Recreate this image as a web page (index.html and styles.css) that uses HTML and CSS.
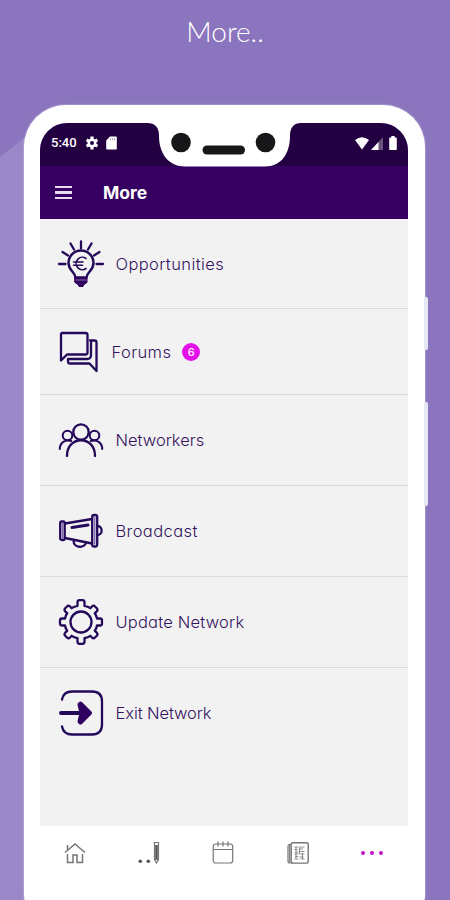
FILE: index.html
```html
<!DOCTYPE html>
<html lang="en">
<head>
    <meta charset="UTF-8">
    <meta name="viewport" content="width=device-width, initial-scale=1.0">
    <title>More</title>
    <link rel="stylesheet" href="styles.css">
</head>
<body>
    <h1 class="page-title">More..</h1>

    <div class="phone">
        <span class="side-button power"></span>
        <span class="side-button volume"></span>

        <div class="screen">
            <!-- Status bar -->
            <div class="status-bar">
                <div class="status-left">
                    <span class="time">5:40</span>
                    <svg width="12" height="14" viewBox="0 0 12 14">
                        <g stroke="#fff" stroke-width="3.2"><path d="M6 .6v12.8M.5 3.8l11 6.4M.5 10.2l11-6.4"/></g>
                        <circle cx="6" cy="7" r="4.5" fill="#fff"/>
                        <circle cx="6" cy="7" r="2" fill="#230042"/>
                    </svg>
                    <svg width="11" height="14" viewBox="0 0 11 14">
                        <path d="M4 .5h6q.8 0 .8.8v11.4q0 .8-.8.8H1q-.8 0-.8-.8V4.5z" fill="#fff"/>
                        <path d="M4.5 2v2.5M6.5 2v2.5M8.5 2v2.5" stroke="#b9aec4"/>
                    </svg>
                </div>
                <div class="status-right">
                    <svg width="14" height="13" viewBox="0 0 14 13"><path d="M0 3Q7-2.5 14 3L7 12.5z" fill="#fff"/></svg>
                    <svg width="12" height="13" viewBox="0 0 12 13"><path d="M12 0v13H0z" fill="#69517c"/><path d="M7.5 4.9V13H0z" fill="#fff"/></svg>
                    <svg class="battery" width="8" height="14" viewBox="0 0 8 14"><path d="M2.3 0h3.4v1.5H7q.8 0 .8.8v10.9q0 .8-.8.8H1q-.8 0-.8-.8V2.3q0-.8.8-.8h1.3z" fill="#fff"/></svg>
                </div>
                <svg class="notch" width="154" height="44" viewBox="0 0 154 44">
                    <path d="M0 0C8 0 12 4 12 13C12 31 22 43.5 38 43.5H118C134 43.5 143 31 143 13C143 4 147 0 154 0z" fill="#fff"/>
                    <circle cx="34" cy="19.5" r="9.8" fill="#17171a"/>
                    <circle cx="118.500" cy="19.5" r="9.8" fill="#17171a"/>
                    <rect x="55.500" y="22.5" width="42.5" height="9" rx="4.5" fill="#17171a"/>
                </svg>
            </div>

            <!-- Header -->
            <header class="header">
                <div class="burger"><i></i><i></i><i></i></div>
                <h2>More</h2>
            </header>

            <!-- Menu -->
            <ul class="menu">
                <li class="menu-item opportunities">
                    <svg class="icon" width="44" height="48" viewBox="0 0 44 48">
                        <path d="M0 24h6.500M37.500 24H44M3.500 12l5.500 3.500M40.500 12L35 15.500M11.500 3.500l3.500 6M32.500 3.500l-3.500 6M22 1.500v7"/>
                        <path d="M16.500 37.500C16.500 32 9.500 31 9.500 23a12.500 12.500 0 0 1 25 0c0 8-7 9-7 14.500z" stroke-width="2.500"/>
                        <path d="M27 18.500a6.200 6.200 0 1 0 0 10M14.500 22h9.500M14.500 25.300h9" stroke-width="1.600"/>
                        <path d="M16 37.500h12v5l-3 2-1 2h-4l-1-2-3-2z" class="solid" stroke-width="1"/>
                        <path d="M17 40h10" stroke="#8d6fa8" stroke-width="1"/>
                    </svg>
                    <span class="label wide">Opportunities</span>
                </li>
                <li class="menu-item forums">
                    <svg class="icon" width="40" height="42" viewBox="0 0 40 42">
                        <path d="M3 2h23.500q2 0 2 2v17.500q0 2-2 2H8l-6 6V3q0-1 1-1z"/>
                        <path d="M31 9.500h4.500q2 0 2 2V40l-7-7.500H11q-2 0-2-2V28h19q4 0 4-4V9.500"/>
                    </svg>
                    <span class="label wide">Forums</span>
                    <span class="badge">6</span>
                </li>
                <li class="menu-item">
                    <svg class="icon" width="44" height="36" viewBox="0 0 44 36">
                        <circle cx="22" cy="10" r="7.700"/>
                        <path d="M8 34c0-21 28-21 28 0"/>
                        <circle cx="8.500" cy="13.500" r="4.800" stroke-width="2"/>
                        <circle cx="35.500" cy="13.500" r="4.800" stroke-width="2"/>
                        <path d="M.8 27c0-6.500 5.500-10 11.500-8M43.200 27c0-6.500-5.500-10-11.500-8" stroke-width="2"/>
                    </svg>
                    <span class="label">Networkers</span>
                </li>
                <li class="menu-item">
                    <svg class="icon" width="44" height="36" viewBox="0 0 44 36">
                        <rect x="1.200" y="8.500" width="4.500" height="18.500" rx="1.500"/>
                        <rect x="33.200" y="2" width="5" height="31.500" rx="2"/>
                        <path d="M6 10.500L33 6M6 25l27 5.500M38.500 13c5.500 0 5.500 9 0 9M14.500 27.500c0 8 11.500 8 12.500 2"/>
                        <path d="M13 14.500l16-2.500" stroke-width="3"/>
                        <path d="M3.500 10v15" stroke="#8270b0" stroke-width="1.500"/>
                        <path d="M35.700 4v27" stroke="#8270b0" stroke-width="1.500"/>
                    </svg>
                    <span class="label wide">Broadcast</span>
                </li>
                <li class="menu-item">
                    <svg class="icon" width="44" height="46" viewBox="0 0 44 46">
                        <path d="M18.500 6.800V3.500Q18.500 1.200 20.500 1.200H23.500Q25.500 1.200 25.500 3.500V6.800Q29 7.500 31.300 9.200L33.200 7.300Q34.500 6 36 7.500L37.800 9.300Q39.200 10.800 37.800 12.300L35.800 14.200Q37.500 16.500 38 19.500H41Q43 19.500 43 21.500V24.500Q43 26.500 41 26.500H38Q37.500 29.500 35.800 31.800L37.800 33.700Q39.200 35.200 37.800 36.700L36 38.500Q34.500 40 33.200 38.700L31.300 36.800Q29 38.500 25.500 39.200V42.500Q25.500 44.800 23.500 44.800H20.500Q18.500 44.800 18.500 42.500V39.200Q15 38.500 12.700 36.800L10.800 38.700Q9.500 40 8 38.500L6.200 36.700Q4.800 35.200 6.200 33.700L8.200 31.800Q6.500 29.500 6 26.500H3Q1 26.500 1 24.500V21.500Q1 19.500 3 19.500H6Q6.500 16.500 8.200 14.200L6.200 12.300Q4.800 10.800 6.200 9.300L8 7.500Q9.500 6 10.800 7.300L12.700 9.200Q15 7.500 18.500 6.800z"/>
                        <circle cx="22" cy="23" r="10.500"/>
                    </svg>
                    <span class="label update">Update Network</span>
                </li>
                <li class="menu-item">
                    <svg class="icon" width="44" height="46" viewBox="0 0 44 46">
                        <path d="M3 9.500Q4.500 1.500 13 1.500H33Q43 1.500 43 11.500V34.500Q43 44.500 33 44.500H13Q4.500 44.500 3 36.500"/>
                        <path d="M2 23h20" stroke-width="4"/>
                        <path d="M21.500 13.500L31 23l-9.500 9.500-1-1 2-8.500-2-8.500z" class="solid" stroke-width="4"/>
                    </svg>
                    <span class="label narrow">Exit Network</span>
                </li>
            </ul>
        </div>

        <!-- Bottom tabs -->
        <nav class="tabs">
            <svg class="tab" width="22" height="22" viewBox="0 0 22 22">
                <path d="M1 10.500L11 2l10 8.500M3.500 8.500V3M3.500 12v8.500h5.500V13h4v7.500h5.500V12" stroke-width="1.500"/>
            </svg>
            <svg class="tab" width="22" height="22" viewBox="0 0 22 22">
                <circle cx="2.300" cy="19.300" r="1.800" fill="#555" stroke="none"/>
                <circle cx="10.300" cy="19.300" r="1.800" fill="#555" stroke="none"/>
                <path d="M16.500.5h4v17l-2 3.500-2-3.500zM16.500 3.500h4M16.500 17.500h4"/>
                <path d="M18.500 4v13" stroke="#555" stroke-width="2.500"/>
            </svg>
            <svg class="tab" width="22" height="24" viewBox="0 0 22 24">
                <rect x="1.200" y="3" width="19.500" height="19" rx="2.500"/>
                <path d="M1 8.500h20M6 .5v5M11 .5v5M16 .5v5"/>
            </svg>
            <svg class="tab" width="22" height="22" viewBox="0 0 22 22">
                <rect x="4.200" y=".8" width="17" height="20.300" rx="1.500" stroke-width="1.400"/>
                <path d="M4 2.500H2.500Q1 2.500 1 4v15q0 2 2 2h3M2.700 3v17"/>
                <path d="M7.500 5h4M13 5h4.500M7.500 7.500h3M12 7h4M8 10h3.500M13 9.500h4.500M7.500 12h4M13 12h4.500M8 14.500h3.500M12.500 15h4M7.500 17h4M13.500 17h4M9 5v12M12.500 5v7M15.500 11v6" stroke-width=".8"/>
            </svg>
            <div class="tab dots"><i></i><i></i><i></i></div>
        </nav>
    </div>
</body>
</html>
```
FILE: styles.css
```css
* {
    margin: 0;
    padding: 0;
    box-sizing: border-box;
}

body {
    position: relative;
    height: 900px;
    overflow: hidden;
    background: #8b75be;
    font-family: Inter, "Open Sans", sans-serif;
}

/* lighter diagonal area behind the phone */
body::before {
    content: "";
    position: absolute;
    left: 0;
    top: 130px;
    width: 34px;
    height: 770px;
    background: #9b88c8;
    clip-path: polygon(0 27px, 34px 0, 100% 100%, 0 100%);
}

.page-title {
    height: 105px;
    padding-top: 14px;
    font-family: Lato, sans-serif;
    font-size: 28px;
    font-weight: 300;
    line-height: 34px;
    letter-spacing: 0;
    text-align: center;
    color: #fff;
}

.phone {
    position: relative;
    width: 401px;
    height: 830px;
    margin-left: 24px;
    padding: 18px 16px 0;
    background: #fff;
    border-radius: 42px;
    box-shadow: 0 0 2px #d9d2ea;
}

.side-button {
    position: absolute;
    right: -3px;
    width: 4px;
    background: #e4e9f3;
    border-radius: 0 2px 2px 0;
}

.power {
    top: 192px;
    height: 53px;
}

.volume {
    top: 297px;
    height: 104px;
}

.screen {
    width: 368px;
    height: 703px;
    background: #f2f2f2;
    border-radius: 27px 27px 0 0;
    overflow: hidden;
}

.status-bar {
    position: relative;
    display: flex;
    justify-content: space-between;
    height: 43px;
    padding: 13px 11px 0;
    background: #230042;
}

.status-left,
.status-right {
    display: flex;
    align-items: center;
    height: 14px;
}

.time {
    width: 35px;
    font-family: Roboto, sans-serif;
    font-size: 13px;
    font-weight: 500;
    line-height: 14px;
    color: #fff;
}

.status-left svg + svg {
    margin-left: 8px;
}

.status-right svg + svg {
    margin-left: 2px;
}

.status-right .battery {
    margin-left: 6px;
}

.notch {
    position: absolute;
    left: 107px;
    top: 0;
    z-index: 1;
}

.header {
    display: flex;
    align-items: center;
    height: 53px;
    padding-left: 15px;
    background: #350062;
}

.burger {
    display: flex;
    flex-direction: column;
    gap: 3px;
    width: 17px;
    margin-right: 31px;
}

.burger i {
    height: 2.500px;
    background: #e4dcec;
}

.header h2 {
    font-size: 17.500px;
    font-weight: 700;
    line-height: 24px;
    color: #fff;
}

.menu {
    list-style: none;
}

.menu-item {
    display: flex;
    align-items: center;
    height: 91px;
    padding-left: 18.500px;
    border-bottom: 1.500px solid #dadada;
}

.menu-item.opportunities {
    height: 90px;
}

.menu-item.forums {
    height: 86px;
}

.menu-item:last-child {
    height: 89px;
    border-bottom: none;
}

.icon {
    margin-right: 13px;
    fill: none;
    stroke: #24085a;
    stroke-width: 2.300;
    stroke-linecap: round;
    stroke-linejoin: round;
    overflow: visible;
}

.icon .solid {
    fill: #300060;
    stroke: #300060;
}

.label {
    font-size: 16.500px;
    font-weight: 300;
    line-height: 24px;
    font-feature-settings: "cv11";
    color: #35125f;
}

.label.wide {
    letter-spacing: 0.400px;
}

.label.update {
    letter-spacing: 0.200px;
}

.label.narrow {
    letter-spacing: -0.100px;
}

.badge {
    width: 18px;
    height: 18px;
    margin-left: 11px;
    border-radius: 50%;
    background: #e412e8;
    font-size: 11px;
    font-weight: 500;
    line-height: 18px;
    text-align: center;
    color: #fff;
}

.tabs {
    display: flex;
    justify-content: space-between;
    align-items: center;
    height: 54px;
    padding: 0 26px 0 24px;
}

.tab {
    fill: none;
    stroke: #757575;
    stroke-width: 1.200;
}

.dots {
    display: flex;
    gap: 4.500px;
}

.dots i {
    width: 4.400px;
    height: 4.400px;
    border-radius: 50%;
    background: #c414c8;
}
```
